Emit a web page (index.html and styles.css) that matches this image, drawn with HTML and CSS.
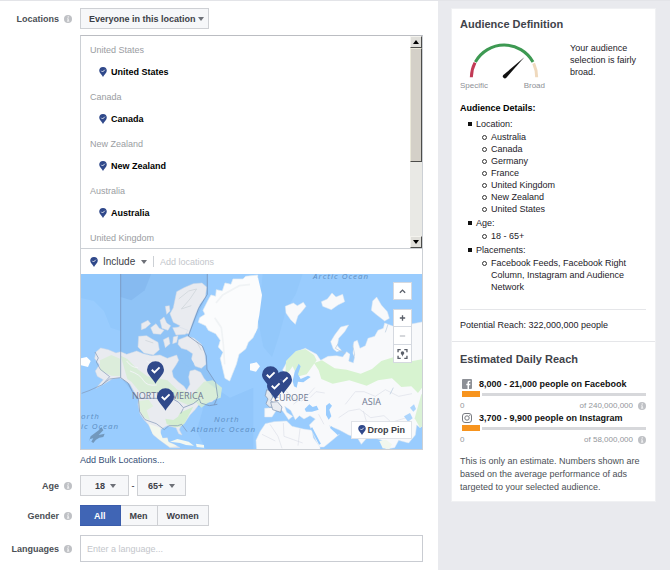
FILE: index.html
```html
<!DOCTYPE html>
<html lang="en">
<head>
<meta charset="utf-8">
<meta name="viewport" content="width=device-width, initial-scale=1">
<title>Audience</title>
<link rel="stylesheet" href="styles.css">
</head>
<body>
<svg class="defs" aria-hidden="true">
  <symbol id="info" viewBox="0 0 8 8"><circle cx="4" cy="4" r="4" fill="#bfc1c5"/><circle cx="4.2" cy="1.9" r=".7" fill="#fff"/><path d="M3 3.4h1.6v2.4h.7v.6H3v-.6h.6V4H3z" fill="#fff"/></symbol>
  <symbol id="pin" viewBox="0 0 50 66"><path d="M25 0a25 25 0 0 0-25 25c0 14 17 25 25 41 8-16 25-27 25-41A25 25 0 0 0 25 0z" fill="#30498b"/><path d="M14 25l8 8 15-15" fill="none" stroke="#fff" stroke-width="5.5"/></symbol>
</svg>
<div class="page">
  <main class="form">
    <div class="row">
      <label class="label" for="who">Locations <svg class="info"><use href="#info"/></svg></label>
      <div class="field">
        <span class="select select-wide"><select id="who"><option>Everyone in this location</option></select></span>
      </div>
    </div>
    <div class="row row-locations">
      <div class="picker">
        <div class="list">
          <div class="groups">
            <h3>United States</h3><p><svg class="pin"><use href="#pin"/></svg>United States</p>
            <h3>Canada</h3><p><svg class="pin"><use href="#pin"/></svg>Canada</p>
            <h3>New Zealand</h3><p><svg class="pin"><use href="#pin"/></svg>New Zealand</p>
            <h3>Australia</h3><p><svg class="pin"><use href="#pin"/></svg>Australia</p>
            <h3>United Kingdom</h3>
          </div>
          <div class="scrollbar">
            <button type="button" aria-label="Scroll up"><svg viewBox="0 0 6 4"><path d="M0 4l3-4 3 4z"/></svg></button>
            <div class="thumb"></div>
            <div class="track"></div>
            <button type="button" aria-label="Scroll down"><svg viewBox="0 0 6 4"><path d="M0 0l3 4 3-4z"/></svg></button>
          </div>
        </div>
        <div class="include">
          <svg class="pin"><use href="#pin"/></svg>
          <span class="select select-plain"><select aria-label="Include or exclude"><option>Include</option></select></span>
          <input type="text" aria-label="Add locations" placeholder="Add locations">
        </div>
        <div class="map">
          <svg class="world" viewBox="0 0 341 175" preserveAspectRatio="xMidYMid slice" role="img" aria-label="World map with selected locations">
            <rect width="341" height="175" fill="#99ccfe"/>
            <g transform="translate(-1 -3) scale(.33333)">
              <path d="M0 0h122v180l-30-10-20-50-30-30-42-10z" fill="#92c8fc"/>
              <path d="M390 340l60 40 70-30v190H380l-30-60z" fill="#91c6fb"/>
              <path d="M122 8H382V70L325 195 372 230 380 290 412 350 412 402 385 405 310 412 175 382 122 320z" fill="#8fc3f6"/>
              <path d="M122 8h92l-20 50-40 30-32-10z" fill="#86baf0"/>
              <g fill="#e9ebf0" stroke="#d3dbe6" stroke-width="1.5" stroke-linejoin="round">
                <path d="M48 243L62 231 85 236 108 246 122 242 140 250 170 240 190 248 215 254 240 252 262 262 290 252 296 268 288 282 276 300 280 318 296 334 312 346 320 358 330 340 326 318 330 300 345 296 362 304 372 322 384 336 398 346 410 356 412 378 396 392 372 396 356 402 345 416 330 432 322 444 314 456 302 466 298 476 306 492 296 488 288 470 262 464 244 474 240 488 246 502 262 500 264 512 282 520 300 530 270 530 240 508 220 492 206 462 192 446 180 428 174 400 176 384 162 362 150 340 130 326 118 320 96 324 70 340 48 352 70 326 52 316 46 300 58 282 44 262z"/>
                <path d="M290 62l22-12 28-12 26-2 14 12-4 30-16 22-10 22-10 26-14 40-20-2-20-8 14-14-20-10-10-26 10-18z"/>
                <path d="M184 158l20-10 8 10-16 14-12 4zM212 170l16-12 10 14 14 6-10 12-22-2zM240 148l12-10 8 18 12 8-8 14-18-6zM176 196l24-2 16 10 18 10 4 22-18 16-28-6-18-18zM256 106l12-2 2 16-10 10zM250 206l16-8 4 20-14 12zM280 198l14-4-4 20-12 4zM278 170l20-2 26 10-8 12-28 2z"/>
                <path d="M296 206l26-10 20 6 22 18 10 24 4 36-14 12-18-6-12-20 4-18-18-12-16-4-10-12z"/>
              </g>
              <path d="M122 254l20 10 30 30 30 22 60 12 30 28 28 6 12 12 20-20 20-22 26-4 28 22-4 30-30 10-28 20-16-16-24 8-54-24-18-12h-70l-28-34-12-8z" fill="#d6edd3" opacity=".85"/>
              <path d="M60 268l34-16 28 12v52l-28-2-34-16z" fill="#dceddb"/>
              <path d="M300 425l40-18-12 22-14 28-14 10-16 2-24-10-4-16 24 4 14-10z" fill="#d3edcf"/>
              <path d="M176 390l30-4 14 20-20 12 10 30-18-8-12-20z" fill="#dff0dc"/>
              <path d="M206 458l34 12 2 16 6 16 14 0 4 12 24 10-20 4-34-24-18-16z" fill="#f2f7ee"/>
              <path d="M150 300q30 10 40 28t40 14M200 270q20 18 46 12M140 270q14 20 34 20" fill="none" stroke="#f1f4f6" stroke-width="3"/>
              <path d="M296 84l30-24 24-6-20 30-26 30 30-10M220 216l-24-8M350 212l14 26" fill="none" stroke="#d5dadf" stroke-width="3"/>
              <path d="M296 250l18-4 16 12 12 20-18 8-14-10z" fill="#8fc3f6"/>
              <path d="M122 8V320l22 16 14 28 17 18H276l20 12 14 16 30-12 18-14 4 12 26 8 24-4M382 8v62l-26 42-31 83 42 30 12 30 2 40 26 40 6 42-10 24" fill="none" stroke="#7189ae" stroke-width="2"/>
              <path d="M45 243l10 18-6 12 12 22 28 22-22 24-40 18-22 8M122 320l-33 4-22 16M175 382l4 40 16 24 34 12 24 18 14-12h26l12-4 16 22M310 412l-8 16" fill="none" stroke="#8195b5" stroke-width="2"/>
              <path d="M0 262l20-4 12 12-8 18-24-6z" fill="#fff"/>
              <path d="M385 86l8-14 14 4 2-20 18 4 8-24 18 4 6-16 30 0 8-8 36-4V170l-14 30-14 14-8 20-20 16-8 30-12 30-8 20-14-8-8-34-6-26 8-18-14-16 6-20-14-20-22-10-8-14-22-10 4-14 16-10-6-12z" fill="#fbfcfd" stroke="#e6edf2" stroke-width="2"/>
              <path d="M408 96l20-24 50-28 36-4M404 140l20 30 6 50 4 60" fill="none" stroke="#f0f3f5" stroke-width="5"/>
              <path d="M270 512l22-8 34 8 16 12-24-2-18-6zM348 518l24 4 0 8-22-2z" fill="#f3f8f2"/>
              <path d="M32 496l24-18 8-10 6 10-14 14 18-4-4 10-12 2-10 6-8 10-6-4 6-10-10 2-4 8z" fill="#7298bd"/>
            </g>
            <g transform="translate(169 -3) scale(.33333)">
              <path d="M38 8h120l-20 60-30 50-22 80-20 60-26-30-16-80z" fill="#93c8fb"/>
              <path d="M0 22l24-2 12 52-8 60-10 50-18 20zM0 278l20-4 10 12-12 16-18-4z" fill="#fbfcfd"/>
              <g fill="#f8f9fb" stroke="#dde7f1" stroke-width="1.5" stroke-linejoin="round">
                <path d="M106 106l24-10 12 8 18-10 8 12-14 18-10 10-8 26-14-14-14-20zM214 92l18-8 14-18 12 12 20-8 6 22-20 10-20 14-26-10z"/>
                <path d="M368 90l12-12 14 24 18 20 6 20-14 8-26-20-14-12zM250 234l-8-22 12-20 18-24 24-6-12 20-18 20-4 22 12 14-14 4z"/>
                <path d="M78 356L100 338 106 318 98 296 116 264 138 242 166 232 200 250 212 268 234 256 260 254 278 258 290 242 300 250 296 270 310 276 314 258 306 242 312 212 322 208 330 232 346 224 354 202 374 196 384 178 400 172 404 156 430 166 452 150 480 160 530 150V456L510 470 500 462 496 492 476 516 446 508 434 530 408 534 396 508 372 500 350 502 334 520 322 500 296 492 270 478 238 464 268 490 244 510 222 528 206 528 190 490 178 462 196 444 180 434 162 444 148 434 136 446 122 418 104 406 110 424 128 436 116 446 98 420 84 410 66 438 44 438 44 412 66 410 64 394 56 384 76 378z"/>
                <path d="M46 458l26-6 38-2 16 16 34 8 26 4 4 22 20 28v14H20l-2-34 12-26z"/>
              </g>
              <path d="M108 270l30-30 28-6 26 18 8 16-16 22-14 20-24 6-10-12-8-18-14 20-8 6z" fill="#daf2d5"/>
              <path d="M192 276l24-8 38 24 36 4 42 12 34-14 28-24 50-16 20-2 12 20 54-10v70l-26 34-20-20-30 2-28-26-42 6-34 16-52-16-50 10-34-14-8-26z" fill="#d7f3d0"/>
              <path d="M514 370h16v86l-20 14-16-28z" fill="#daf2d5"/>
              <path d="M128 330l6-28 12-24 6 8-8 24 8 14 22-10 8 4-22 16-16-2-4 18-8-4z" fill="#99ccfe"/>
              <path d="M300 250l4-30 6 12-4 30zM228 404l10-8 8 8-8 12 6 20-8 10-8-14zM164 414l14-14 10 8 12-4 6 12-20 6-18 0z" fill="#99ccfe"/>
              <path d="M184 470l26 50" fill="none" stroke="#99ccfe" stroke-width="6"/>
              <path d="M242 468l24 22" fill="none" stroke="#99ccfe" stroke-width="7"/>
              <path d="M60 460l24 36 12 36M100 456l2 40 56 20M150 474l-6 50M36 490l40 20M206 430l16 30M266 440l30-20 32-6 34 26 40-6 22 20 46-14M286 400l30-38 26 0 34 14 30-20 40 20 40-8M330 460l-18 20M340 420l10 34 40 22 34-10M120 380l36 10 20-20 18-20M180 380l18-18 26 4M100 350l16 18M130 400l18-14" fill="none" stroke="#dcdfe9" stroke-width="2"/>
              <path d="M264 218l-8 14 30 16M300 272l14-20-6-30M414 160l-8 24M420 370l10-20" fill="none" stroke="#b5c8dc" stroke-width="2"/>
              <path d="M462 436l18-10 8 16-14 10zM480 410l12-10 6 14-8 8z" fill="#99ccfe" opacity=".8"/>
              <path d="M388 510l20-4 18 14-8 14-20-2z" fill="#f2f7ee"/>
              <path d="M50 356l12 4 6 18-6 12 16 8-2 12-18-2-10-10 6-14-8-10z" fill="#e3e8ef" stroke="#7b8fac" stroke-width="2"/>
              <path d="M62 394l20-2 14 16-4 16-24-8z" fill="#e9ecf1" stroke="#7b8fac" stroke-width="2"/>
            </g>
            <g class="land-names"><text x="51" y="125">NORTH AMERICA</text><text x="193" y="127">EUROPE</text><text x="281" y="131">ASIA</text></g>
            <g class="sea-names"><text x="232" y="5">Arctic Ocean</text><text x="133" y="148">North</text><text x="110" y="158">Atlantic Ocean</text><text x="0" y="145">orth</text><text x="0" y="155">ic Ocean</text></g>
            <g>
              <use href="#pin" x="66" y="87" width="17" height="23"/>
              <use href="#pin" x="76" y="114" width="17" height="23"/>
              <use href="#pin" x="181" y="92" width="17" height="23"/>
              <use href="#pin" x="194" y="97" width="17" height="23"/>
              <use href="#pin" x="186" y="103" width="17" height="23"/>
            </g>
          </svg>
          <div class="map-tools">
            <button type="button" aria-label="Collapse map"><svg viewBox="0 0 18 18"><path d="M6 11l3-3 3 3"/></svg></button>
            <div class="zoom">
              <button type="button" aria-label="Zoom in"><svg viewBox="0 0 18 18"><path d="M9 6v6M6 9h6"/></svg></button>
              <button type="button" aria-label="Zoom out"><svg viewBox="0 0 18 18" class="faint"><path d="M6 9h6"/></svg></button>
              <button type="button" aria-label="Fit to pins"><svg viewBox="0 0 18 18"><path d="M4 7V4h3M11 4h3v3M14 11v3h-3M7 14H4v-3"/><path d="M9 6a2 2 0 0 1 2 2c0 1-1.500 2-2 4-.5-2-2-3-2-4a2 2 0 0 1 2-2z" class="solid"/></svg></button>
            </div>
          </div>
          <button type="button" class="drop"><svg class="pin"><use href="#pin"/></svg>Drop Pin</button>
        </div>
      </div>
      <a class="bulk" href="#bulk">Add Bulk Locations...</a>
    </div>
    <div class="row">
      <label class="label" for="age-min">Age <svg class="info"><use href="#info"/></svg></label>
      <div class="field">
        <span class="select select-age"><select id="age-min"><option>18</option></select></span>
        <span class="dash">-</span>
        <span class="select select-age select-max"><select aria-label="Maximum age"><option>65+</option></select></span>
      </div>
    </div>
    <div class="row">
      <span class="label" id="gender">Gender <svg class="info"><use href="#info"/></svg></span>
      <div class="segments" role="group" aria-labelledby="gender">
        <button type="button" class="on" aria-pressed="true">All</button>
        <button type="button" aria-pressed="false">Men</button>
        <button type="button" aria-pressed="false">Women</button>
      </div>
    </div>
    <div class="row">
      <label class="label" for="lang">Languages <svg class="info"><use href="#info"/></svg></label>
      <input class="language" id="lang" type="text" placeholder="Enter a language...">
    </div>
  </main>
  <aside class="side">
    <div class="card">
      <section class="definition">
        <h2>Audience Definition</h2>
        <div class="gauge-row">
          <div class="gauge">
            <svg viewBox="45 126 255 114" role="img" aria-label="Fairly broad">
              <g fill="none" stroke-width="9">
                <path d="M79 232A99 99 0 0 1 90 188" stroke="#c23a55"/>
                <path d="M91 186A99 99 0 0 1 264 186" stroke="#3d9952"/>
                <path d="M266 190A99 99 0 0 1 275 232" stroke="#efd9bd"/>
              </g>
              <path d="M238 172L184 233a6 6 0 0 1-9-8z" fill="#111"/>
            </svg>
            <div class="ends"><span>Specific</span><span>Broad</span></div>
          </div>
          <p>Your audience selection is fairly broad.</p>
        </div>
        <h3>Audience Details:</h3>
        <ul class="details">
          <li>Location:
            <ul><li>Australia</li><li>Canada</li><li>Germany</li><li>France</li><li>United Kingdom</li><li>New Zealand</li><li>United States</li></ul></li>
          <li>Age:
            <ul><li>18 - 65+</li></ul></li>
          <li>Placements:
            <ul><li>Facebook Feeds, Facebook Right Column, Instagram and Audience Network</li></ul></li>
        </ul>
        <p class="potential">Potential Reach: 322,000,000 people</p>
      </section>
      <section class="reach">
        <h2>Estimated Daily Reach</h2>
        <div class="metric">
          <h3><svg viewBox="0 0 10 10"><rect width="10" height="10" rx="1" fill="#8d9096"/><path d="M5.500 10V6.200H4.300V4.800h1.200V3.600c0-1.300.8-1.900 1.900-1.900h1v1.300h-.7c-.6 0-.7.300-.7.700v1.100h1.400l-.2 1.400H7V10z" fill="#fff"/></svg>8,000 - 21,000 people on Facebook</h3>
          <div class="bar"><i></i></div>
          <div class="scale"><span>0</span><span>of 240,000,000 <svg class="info"><use href="#info"/></svg></span></div>
        </div>
        <div class="metric">
          <h3><svg viewBox="0 0 10 10" fill="none" stroke="#777a80"><rect x=".5" y=".5" width="9" height="9" rx="2.500"/><circle cx="5" cy="5" r="2.200"/><circle cx="7.600" cy="2.400" r=".2"/></svg>3,700 - 9,900 people on Instagram</h3>
          <div class="bar"><i></i></div>
          <div class="scale"><span>0</span><span>of 58,000,000 <svg class="info"><use href="#info"/></svg></span></div>
        </div>
        <p class="note">This is only an estimate. Numbers shown are based on the average performance of ads targeted to your selected audience.</p>
      </section>
    </div>
  </aside>
</div>
</body>
</html>
```
FILE: styles.css
```css
* { box-sizing: border-box; }
body { margin: 0; background: #fff; color: #1d2129; font: 9px/12px "Liberation Sans", Arial, sans-serif; }
h2, h3, p, ul { margin: 0; padding: 0; font-size: inherit; }
button, select, input { font: inherit; color: inherit; margin: 0; }
svg { display: block; flex: none; }
.defs { position: absolute; width: 0; height: 0; }
.info { width: 8px; height: 8px; }
.pin { width: 8px; height: 10px; }

.page { display: grid; grid-template-columns: minmax(0, 1fr) 232px; min-height: 100vh; border-top: 1px solid #e3e4e8; }
.form { padding: 7px 15px 7px 0; display: flex; flex-direction: column; gap: 9px; }
.row { display: grid; grid-template-columns: 72px minmax(0, 1fr); column-gap: 8px; align-items: center; }
.label { display: flex; justify-content: flex-end; align-items: center; gap: 5px; color: #4b4f56; font-weight: bold; }
.field { display: flex; align-items: center; }
.row-locations { margin-top: -3px; }
.row-locations > * { grid-column: 2; }

.select { position: relative; display: inline-block; }
.select select { appearance: none; width: 100%; height: 21px; padding: 0 6px 0 8px; border: 1px solid #ced0d4; border-radius: 0; background: #f6f7f9; color: #3c4047; font-weight: bold; }
.select::after { content: ""; position: absolute; right: 5px; top: 9px; border: 3px solid transparent; border-top: 4px solid #6d7077; border-bottom: 0; pointer-events: none; }
.select-wide { width: 129px; }
.select-age { width: 49px; }
.select-age select { padding: 0 0 0 14px; }
.select-age::after { right: 13px; }
.select-max select { padding-left: 10px; }
.select-max::after { right: 11px; }
.select.select-plain { width: 44px; }
.select-plain select { padding: 0; border: 0; background: none; font-size: 10px; font-weight: normal; }
.select-plain::after { right: 0; }
.dash { width: 8px; text-align: center; }

.picker { border: 1px solid #ccd0d5; border-top-color: #bbbdc2; }
.list { display: flex; height: 213px; overflow: hidden; border-bottom: 1px solid #ccd0d5; }
.groups { flex: 1; padding: 3px 9px 0; }
.groups h3 { color: #9a9da2; font-weight: normal; line-height: 22px; }
.groups p { display: flex; align-items: center; gap: 4px; margin-bottom: 3px; padding-left: 9px; color: #000; font-weight: bold; line-height: 22px; }
.scrollbar { display: flex; flex-direction: column; width: 12px; background: #e9e9e5; }
.scrollbar button { display: grid; place-items: center; height: 12px; padding: 0; border: 1px solid #f4f3ee; border-right-color: #4c4c4a; border-bottom-color: #4c4c4a; background: #e0dfda; }
.scrollbar svg { width: 6px; height: 4px; }
.thumb { height: 114px; border: 1px solid #eceadb; border-right-color: #4c4c4a; border-bottom-color: #4c4c4a; background: #d4d0c8; }
.track { flex: 1; }
.include { display: flex; align-items: center; height: 25px; padding-left: 9px; gap: 5px; }
.include input { flex: 1; min-width: 0; height: 11px; margin-left: 1px; padding: 0 0 0 6px; border: 0; border-left: 1px solid #ccd0d5; background: none; outline: 0; }
::placeholder { color: #c3c6cb; opacity: 1; }

.map { position: relative; height: 175px; overflow: hidden; }
.world { width: 100%; height: 100%; }
.land-names { font: 9px "Open Sans", sans-serif; fill: #6f7891; }
.sea-names { font: italic 8px "Open Sans", sans-serif; letter-spacing: 1px; fill: #5d8fc4; }
.map-tools { position: absolute; top: 8px; right: 10px; display: grid; gap: 9px; }
.map-tools button { display: block; width: 19px; height: 18px; padding: 0; border: 1px solid #d5d9e0; background: #fff; }
.map-tools svg { width: 17px; height: 16px; fill: none; stroke: #5a5f69; stroke-width: 1.5; }
.map-tools .solid { fill: #5a5f69; stroke: none; }
.map-tools .faint { stroke: #c0c3c9; }
.zoom button + button { border-top: 0; }
.drop { position: absolute; right: 10px; bottom: 10px; display: flex; align-items: center; gap: 2px; height: 18px; padding: 0 6px; border: 1px solid #e0e3e8; background: #fff; color: #3c4047; font-weight: bold; }
.bulk { justify-self: start; margin-top: 4px; color: #365077; text-decoration: none; }

.segments { display: flex; }
.segments button { height: 21px; padding: 0 9px; border: 1px solid #ced0d4; border-left: 0; background: #f6f7f9; color: #3c4047; font-weight: bold; }
.segments .on { padding: 0 14px; border-color: #3a5cab; background: #4065b5; color: #fff; }
.language { width: 100%; height: 27px; padding: 0 6px; border: 1px solid #c9ccd2; background: #fff; }

.side { padding: 7px 14px 7px 13px; background: #e9eaee; }
.card { background: #fff; border: 1px solid #f0f1f3; }
.card h2 { color: #3f434a; font-size: 11px; line-height: 14px; }
.definition { padding: 8px 9px 10px 8px; border-bottom: 1px solid #e5e6e9; }
.gauge-row { display: flex; justify-content: space-between; margin-top: 11px; }
.gauge { width: 85px; }
.gauge svg { width: 85px; height: 38px; }
.gauge-row p { width: 76px; }
.ends { display: flex; justify-content: space-between; color: #8d9096; font-size: 8px; }
.definition h3 { margin-top: 10px; color: #000; }
.details { margin-top: 4px; padding-left: 16px; list-style: none; }
.details > li { position: relative; margin-bottom: 2px; }
.details > li::before { content: ""; position: absolute; left: -8px; top: 4px; width: 4px; height: 4px; background: #111; }
.details ul { padding: 1px 0 0 15px; list-style: none; }
.details ul li { position: relative; }
.details ul li::before { content: ""; position: absolute; left: -9px; top: 4px; box-sizing: border-box; width: 5px; height: 5px; border: 1px solid #333; border-radius: 50%; }
.potential { margin-top: 16px; padding-top: 9px; border-top: 1px solid #e5e6e9; }
.reach { padding: 10px 9px 7px 8px; }
.metric h3 { display: flex; align-items: center; gap: 7px; height: 14px; padding-left: 2px; color: #111; }
.metric h3 svg { width: 10px; height: 10px; }
.reach h2 { margin-bottom: 11px; }
.bar { display: flex; align-items: center; height: 6px; margin-left: 2px; }
.bar i { width: 18px; height: 6px; margin-right: 2px; background: #f7941e; }
.bar::after { content: ""; flex: 1; height: 3px; background: #d7d8db; }
.scale { display: flex; justify-content: space-between; height: 14px; padding-top: 3px; color: #93969b; font-size: 8px; }
.scale span { display: flex; align-items: center; gap: 5px; }
.note { margin-top: 10px; color: #4b4f56; line-height: 13px; }
```
